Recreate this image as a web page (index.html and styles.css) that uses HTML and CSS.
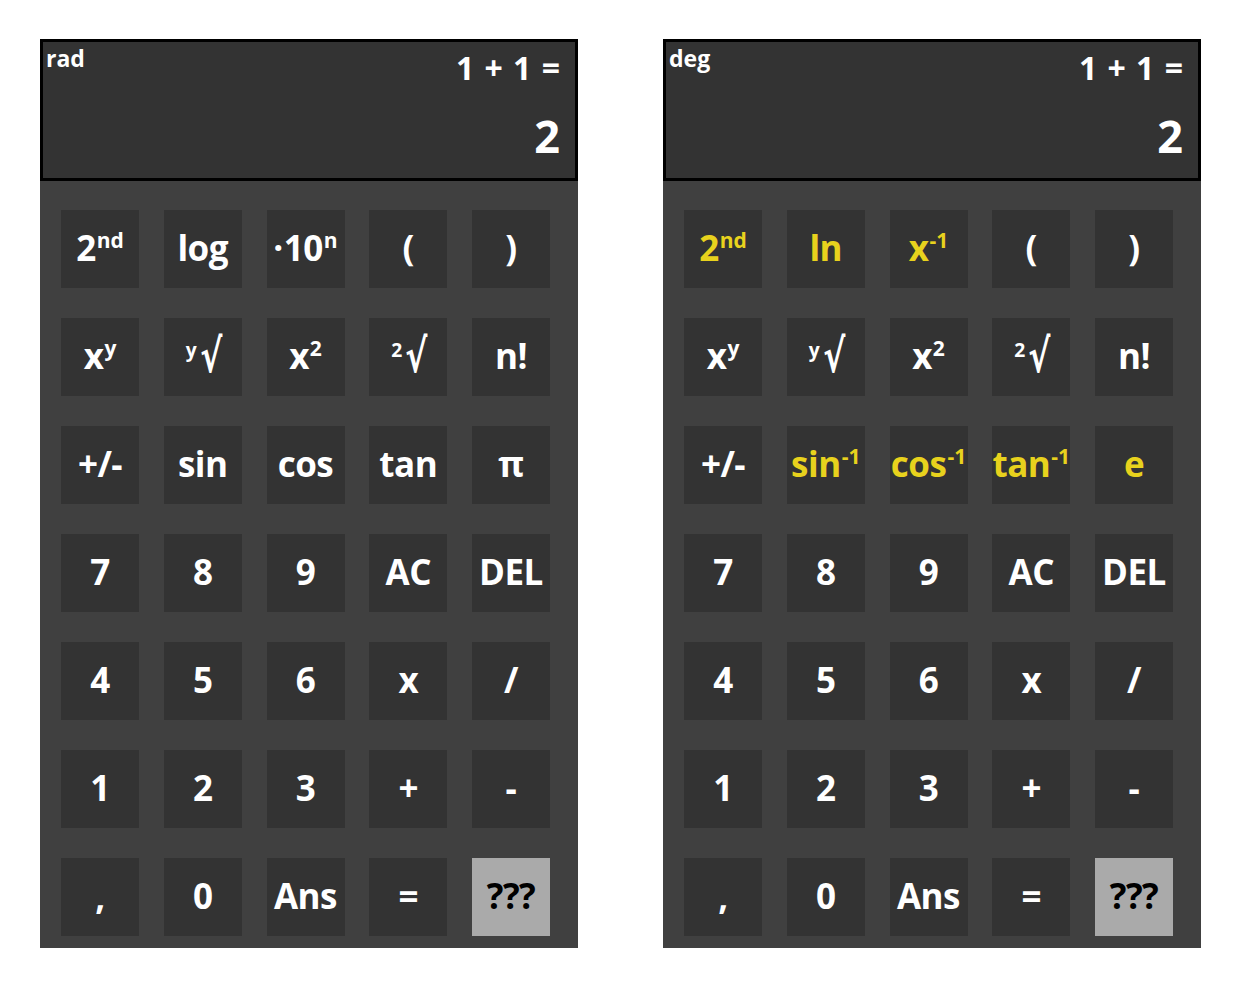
FILE: index.html
```html
<!DOCTYPE html>
<html lang="en">
<head>
<meta charset="utf-8">
<title>Calculator</title>
<link rel="stylesheet" href="styles.css">
</head>
<body>
<div class="page">
  <div class="calc">
    <div class="display">
      <div class="display-top">
        <span class="mode">rad</span>
        <span class="expr">1 + 1 =</span>
      </div>
      <div class="result">2</div>
    </div>
    <div class="keypad">
      <div class="key">2<sup class="sup">nd</sup></div>
      <div class="key">log</div>
      <div class="key"><span class="dot">·</span>10<sup class="sup">n</sup></div>
      <div class="key">(</div>
      <div class="key">)</div>

      <div class="key">x<sup class="sup">y</sup></div>
      <div class="key"><sup class="sup pre">y</sup><span class="root">√</span></div>
      <div class="key">x<sup class="sup">2</sup></div>
      <div class="key"><sup class="sup pre">2</sup><span class="root">√</span></div>
      <div class="key">n!</div>

      <div class="key">+/-</div>
      <div class="key">sin</div>
      <div class="key">cos</div>
      <div class="key">tan</div>
      <div class="key">π</div>

      <div class="key">7</div>
      <div class="key">8</div>
      <div class="key">9</div>
      <div class="key">AC</div>
      <div class="key">DEL</div>

      <div class="key">4</div>
      <div class="key">5</div>
      <div class="key">6</div>
      <div class="key">x</div>
      <div class="key">/</div>

      <div class="key">1</div>
      <div class="key">2</div>
      <div class="key">3</div>
      <div class="key">+</div>
      <div class="key">-</div>

      <div class="key">,</div>
      <div class="key">0</div>
      <div class="key">Ans</div>
      <div class="key">=</div>
      <div class="key key-help">???</div>
    </div>
  </div>

  <div class="calc">
    <div class="display">
      <div class="display-top">
        <span class="mode">deg</span>
        <span class="expr">1 + 1 =</span>
      </div>
      <div class="result">2</div>
    </div>
    <div class="keypad">
      <div class="key alt">2<sup class="sup">nd</sup></div>
      <div class="key alt">ln</div>
      <div class="key alt">x<sup class="sup">-1</sup></div>
      <div class="key">(</div>
      <div class="key">)</div>

      <div class="key">x<sup class="sup">y</sup></div>
      <div class="key"><sup class="sup pre">y</sup><span class="root">√</span></div>
      <div class="key">x<sup class="sup">2</sup></div>
      <div class="key"><sup class="sup pre">2</sup><span class="root">√</span></div>
      <div class="key">n!</div>

      <div class="key">+/-</div>
      <div class="key alt">sin<sup class="sup">-1</sup></div>
      <div class="key alt">cos<sup class="sup">-1</sup></div>
      <div class="key alt">tan<sup class="sup">-1</sup></div>
      <div class="key alt">e</div>

      <div class="key">7</div>
      <div class="key">8</div>
      <div class="key">9</div>
      <div class="key">AC</div>
      <div class="key">DEL</div>

      <div class="key">4</div>
      <div class="key">5</div>
      <div class="key">6</div>
      <div class="key">x</div>
      <div class="key">/</div>

      <div class="key">1</div>
      <div class="key">2</div>
      <div class="key">3</div>
      <div class="key">+</div>
      <div class="key">-</div>

      <div class="key">,</div>
      <div class="key">0</div>
      <div class="key">Ans</div>
      <div class="key">=</div>
      <div class="key key-help">???</div>
    </div>
  </div>
</div>
</body>
</html>
```

FILE: styles.css
```css
html, body {
  margin: 0;
  padding: 0;
  background: #ffffff;
}

body {
  font-family: "Open Sans", "Noto Sans", "DejaVu Sans", sans-serif;
  font-weight: 700;
  color: #ffffff;
}

.page {
  display: flex;
  gap: 85px;
  padding: 39px 0 0 40px;
}

.calc {
  width: 538px;
  display: flex;
  flex-direction: column;
}

.display {
  height: 136px;
  background: #333333;
  border: 3px solid #000000;
  padding: 0 15px 0 3px;
  display: flex;
  flex-direction: column;
}

.display-top {
  display: flex;
  justify-content: space-between;
  align-items: flex-start;
}

.mode {
  font-size: 23px;
  line-height: 23px;
  margin-top: 5px;
}

.expr {
  font-size: 32px;
  line-height: 32px;
  margin-top: 10px;
  word-spacing: 2px;
}

.result {
  align-self: flex-end;
  font-size: 45px;
  line-height: 45px;
  margin-top: 29px;
}

.keypad {
  background: #404040;
  display: grid;
  grid-template-columns: repeat(5, 78px);
  grid-auto-rows: 78px;
  column-gap: 24.75px;
  row-gap: 30px;
  padding: 29px 0 12px 21px;
}

.key {
  background: #333333;
  text-align: center;
  font-size: 35px;
  line-height: 76px;
  letter-spacing: -0.5px;
  white-space: nowrap;
  overflow: hidden;
}

.key.alt {
  color: #e8d21d;
}

.key-help {
  background: #aaaaaa;
  color: #000000;
}

.sup {
  font-size: 0.6em;
  line-height: 0;
  vertical-align: 0.62em;
  letter-spacing: 0;
  margin-left: 1px;
}

.sup.pre {
  margin-left: 0;
  margin-right: 2px;
  vertical-align: 0.6em;
  font-size: 0.55em;
}

.dot {
  margin-right: 1px;
}

.root {
  display: inline-block;
  font-family: "DejaVu Sans", sans-serif;
  font-weight: 700;
  font-size: 46px;
  line-height: 0;
  vertical-align: -3px;
  transform: scaleX(0.72);
  margin-left: -3px;
  margin-right: -6px;
}
```
